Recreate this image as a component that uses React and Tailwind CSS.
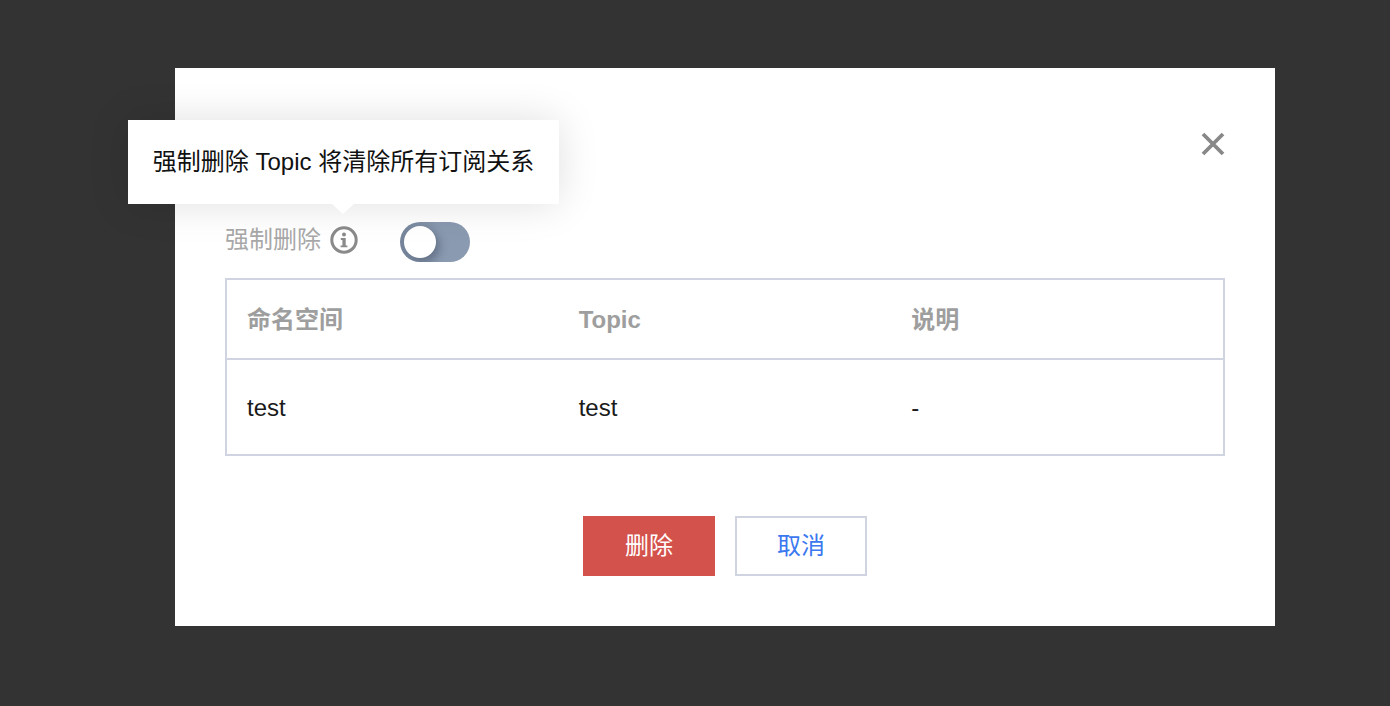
const font = { fontFamily: '"Liberation Sans", "Noto Sans CJK SC", sans-serif' };

function InfoIcon() {
  return (
    <svg width="28" height="28" viewBox="0 0 28 28" fill="none" className="shrink-0">
      <circle cx="14" cy="14" r="12.2" stroke="#8a8a8a" strokeWidth="3" />
      <circle cx="14" cy="8.6" r="2" fill="#8a8a8a" />
      <path d="M10.8 12h4.9v7.4h1.7v1.9H10.6v-1.9h1.8v-5.5h-1.6z" fill="#8a8a8a" />
    </svg>
  );
}

function CloseIcon() {
  return (
    <svg width="26" height="26" viewBox="0 0 26 26" fill="none">
      <path d="M3 3l20 20M23 3L3 23" stroke="#888888" strokeWidth="3.8" strokeLinecap="butt" />
    </svg>
  );
}

export default function App() {
  return (
    <div style={font} className="h-[706px] w-full bg-[#333333] pt-[68px] pl-[175px] overflow-hidden">
      <div className="relative h-[558px] w-[1100px] bg-white px-[50px] pt-[154px]">
        <button className="absolute left-[1025px] top-[63px] flex h-[26px] w-[26px] items-center justify-center">
          <CloseIcon />
        </button>

        <div className="absolute left-[-47px] top-[52px] flex h-[84px] w-[431px] items-center justify-center whitespace-nowrap bg-white text-[24px] text-[#111111] shadow-[0_0_40px_rgba(0,0,0,0.13)]">
          强制删除 Topic 将清除所有订阅关系
          <div className="absolute left-[204px] top-[84px] h-0 w-0 border-x-[11px] border-t-[10px] border-x-transparent border-t-white" />
        </div>

        <div className="flex h-[40px] items-center">
          <div className="flex items-center pb-[4px]">
            <span className="text-[24px] font-normal leading-[36px] text-[#a8a8a8]">强制删除</span>
            <span className="ml-[9px] flex"><InfoIcon /></span>
          </div>
          <div className="ml-[42px] flex h-[40px] w-[70px] items-center overflow-hidden rounded-full bg-[linear-gradient(90deg,#77869c_0%,#8a9ab0_55%)] pl-[4px]">
            <div className="h-[32px] w-[32px] rounded-full bg-white shadow-[4px_4px_8px_rgba(50,60,80,0.4)]" />
          </div>
        </div>

        <table className="mt-[16px] w-[1000px] table-fixed border-collapse border-2 border-[#d0d4e0] text-[24px]">
          <thead>
            <tr className="h-[80px] border-b-2 border-[#d0d4e0]">
              <th className="pl-[20px] pt-[2px] text-left font-bold text-[#9e9e9e]">命名空间</th>
              <th className="pl-[20px] pt-[2px] text-left font-bold text-[#9e9e9e]">Topic</th>
              <th className="pl-[20px] pt-[2px] text-left font-bold text-[#9e9e9e]">说明</th>
            </tr>
          </thead>
          <tbody>
            <tr className="h-[96px] text-[#1a1a1a]">
              <td className="pl-[20px] pt-[2px]">test</td>
              <td className="pl-[20px] pt-[2px]">test</td>
              <td className="pl-[20px] pt-[2px]">-</td>
            </tr>
          </tbody>
        </table>

        <div className="mt-[60px] flex justify-center gap-[20px]">
          <button className="h-[60px] w-[132px] bg-[#d4524c] text-[24px] text-white">删除</button>
          <button className="h-[60px] w-[132px] border-2 border-[#d0d4e0] bg-white text-[24px] text-[#3b78f0]">取消</button>
        </div>
      </div>
    </div>
  );
}
